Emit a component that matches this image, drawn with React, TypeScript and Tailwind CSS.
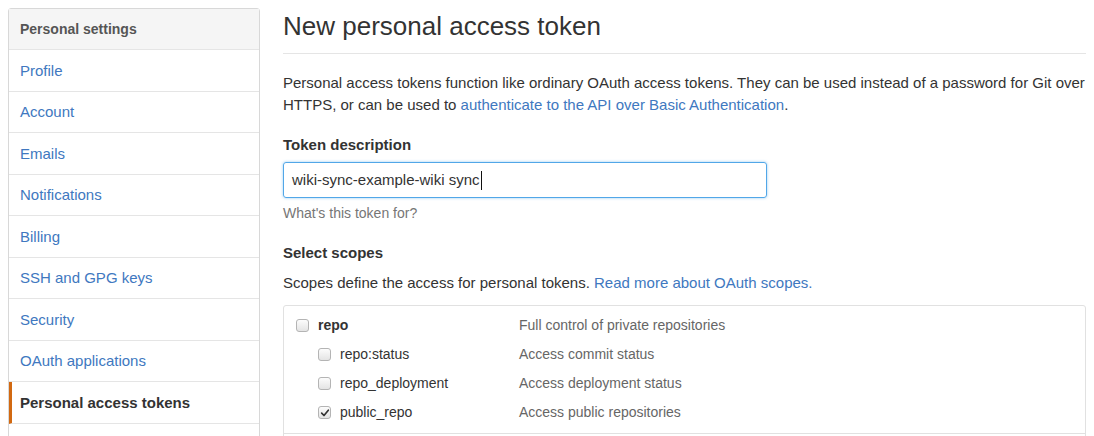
import React from 'react'

const font = { fontFamily: '"Liberation Sans", Arial, Helvetica, sans-serif' }

const navItems = [
  'Profile',
  'Account',
  'Emails',
  'Notifications',
  'Billing',
  'SSH and GPG keys',
  'Security',
  'OAuth applications',
]

const scopes = [
  { name: 'repo', desc: 'Full control of private repositories', child: false, checked: false },
  { name: 'repo:status', desc: 'Access commit status', child: true, checked: false },
  { name: 'repo_deployment', desc: 'Access deployment status', child: true, checked: false },
  { name: 'public_repo', desc: 'Access public repositories', child: true, checked: true },
]

const Checkbox = ({ checked }: { checked: boolean }) => (
  <span className="relative inline-flex h-[13px] w-[13px] shrink-0 items-center justify-center rounded-[3px] border border-[#b4b4b4] bg-gradient-to-b from-[#fcfcfc] to-[#e4e4e4]">
    {checked && (
      <svg viewBox="0 0 12 12" className="h-[10px] w-[10px]">
        <path d="M2 6.2 L4.8 9 L10 2.6" fill="none" stroke="#333" strokeWidth="2" strokeLinecap="round" strokeLinejoin="round" />
      </svg>
    )}
  </span>
)

export default function App() {
  return (
    <div className="flex h-[436px] gap-[23px] overflow-hidden bg-white pl-2 pt-2 text-[15px] text-[#333]" style={font}>
      <nav className="w-[252px] shrink-0 self-start rounded-t-[3px] border border-[#d8d8d8]">
        <div className="flex h-[41px] items-center border-b border-[#e5e5e5] bg-[#f5f5f5] px-[11px] text-[14px] font-bold text-[#555]">
          Personal settings
        </div>
        {navItems.map((item) => (
          <div key={item} className="flex h-[41.5px] items-center border-b border-[#e5e5e5] px-[11px] pt-px text-[#4078c0]">
            {item}
          </div>
        ))}
        <div className="flex h-[41.5px] items-center border-b border-[#e5e5e5] border-l-[3px] border-l-[#d26911] pl-[8px] pt-px font-bold text-[#333]">
          Personal access tokens
        </div>
        <div className="h-[41px]" />
      </nav>

      <main className="w-[803px] shrink-0">
        <h1 className="border-b border-[#e5e5e5] pb-[11px] pt-[3px] text-[26px] font-normal leading-[31px] text-[#333]">
          New personal access token
        </h1>
        <p className="mt-[18px] leading-[22px]">
          Personal access tokens function like ordinary OAuth access tokens. They can be used instead of a password for Git over HTTPS, or can be used to{' '}
          <a className="text-[#4078c0]">authenticate to the API over Basic Authentication</a>.
        </p>

        <div className="mt-[18px] pt-px font-bold leading-[20px]">Token description</div>
        <div className="mt-[7px] flex h-[36px] w-[484px] items-center rounded-[3px] border border-[#51a7e8] px-[8px] text-[15px] shadow-[0_0_3px_rgba(81,167,232,0.6)]">
          wiki-sync-example-wiki sync
          <span className="ml-px h-[19px] w-px bg-[#111]" />
        </div>
        <div className="mt-[5px] text-[14px] leading-[20px] text-[#767676]">What's this token for?</div>

        <div className="mt-[20px] font-bold leading-[20px]">Select scopes</div>
        <p className="mt-[10px] leading-[20px]">
          Scopes define the access for personal tokens.{' '}
          <a className="text-[#4078c0]">Read more about OAuth scopes.</a>
        </p>

        <div className="mt-[12px] rounded-[3px] border border-[#e1e1e1] text-[14px]">
          <div className="border-b border-[#e1e1e1] px-[12px] pb-[6px] pt-[5px]">
            {scopes.map((s) => (
              <div key={s.name} className="flex h-[29px] items-center">
                <div className={`flex w-[223px] items-center gap-[9px] ${s.child ? 'pl-[22px]' : ''}`}>
                  <Checkbox checked={s.checked} />
                  <span className={s.child ? '' : 'font-bold'}>{s.name}</span>
                </div>
                <span className="text-[#666]">{s.desc}</span>
              </div>
            ))}
          </div>
          <div className="h-[40px]" />
        </div>
      </main>
    </div>
  )
}
